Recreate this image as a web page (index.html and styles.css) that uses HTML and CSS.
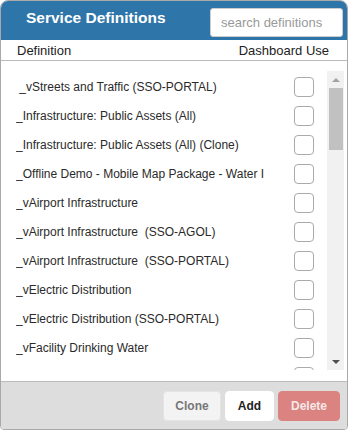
FILE: index.html
```html
<!DOCTYPE html>
<html lang="en">
<head>
    <meta charset="UTF-8">
    <meta name="viewport" content="width=device-width, initial-scale=1.0">
    <title>Service Definitions</title>
    <link rel="stylesheet" href="styles.css">
</head>
<body>
    <div class="panel">
        <!-- Header -->
        <div class="panel-header">
            <h1 class="title">Service Definitions</h1>
            <input type="text" class="search" placeholder="search definitions" />
        </div>

        <div class="columns">
            <span>Definition</span>
            <span>Dashboard Use</span>
        </div>

        <!-- Definition list -->
        <div class="panel-body">
            <div class="list">
                <div class="row"><span class="label"> _vStreets and Traffic (SSO-PORTAL)</span><span class="check"></span></div>
                <div class="row"><span class="label">_Infrastructure: Public Assets (All)</span><span class="check"></span></div>
                <div class="row"><span class="label">_Infrastructure: Public Assets (All) (Clone)</span><span class="check"></span></div>
                <div class="row"><span class="label">_Offline Demo - Mobile Map Package - Water I</span><span class="check"></span></div>
                <div class="row"><span class="label">_vAirport Infrastructure</span><span class="check"></span></div>
                <div class="row"><span class="label">_vAirport Infrastructure  (SSO-AGOL)</span><span class="check"></span></div>
                <div class="row"><span class="label">_vAirport Infrastructure  (SSO-PORTAL)</span><span class="check"></span></div>
                <div class="row"><span class="label">_vElectric Distribution</span><span class="check"></span></div>
                <div class="row"><span class="label">_vElectric Distribution (SSO-PORTAL)</span><span class="check"></span></div>
                <div class="row"><span class="label">_vFacility Drinking Water</span><span class="check"></span></div>
                <div class="row"><span class="label"></span><span class="check"></span></div>
            </div>
            <div class="scrollbar">
                <div class="arrow arrow-up"></div>
                <div class="track"><div class="thumb"></div></div>
                <div class="arrow arrow-down"></div>
            </div>
        </div>

        <!-- Footer buttons -->
        <div class="panel-footer">
            <button class="btn btn-clone">Clone</button>
            <button class="btn btn-add">Add</button>
            <button class="btn btn-delete">Delete</button>
        </div>
    </div>
</body>
</html>
```

FILE: styles.css
```css
body {
    font-family: 'Liberation Sans', Arial, sans-serif;
    margin: 0;
    background: #fff;
    color: #222;
}
.panel {
    width: 348px;
    height: 430px;
    box-sizing: border-box;
    border: 1px solid #a9a9a9;
    border-radius: 8px 8px 4px 4px;
    overflow: hidden;
    display: flex;
    flex-direction: column;
}
.panel-header {
    height: 39px;
    background: #2e75a9;
    display: flex;
    align-items: center;
    justify-content: space-between;
    padding: 0 4px 0 25px;
}
.title {
    margin: 0 0 6px;
    font-size: 15.5px;
    font-weight: bold;
    color: #fff;
}
.search {
    width: 133px;
    height: 29px;
    box-sizing: border-box;
    margin-top: 3px;
    border: 1px solid #ccc;
    border-radius: 3px;
    padding: 0 10px;
    font-family: inherit;
    font-size: 13px;
    color: #333;
}
.search::placeholder {
    color: #999;
}
.columns {
    height: 20px;
    border-bottom: 1px solid #bbb;
    display: flex;
    align-items: center;
    justify-content: space-between;
    padding: 0 18px 0 16px;
    font-size: 13px;
    color: #222;
}
.panel-body {
    flex: 1;
    display: flex;
    padding: 10px 3px 11px 15px;
    min-height: 0;
}
.list {
    flex: 1;
    overflow: hidden;
    padding-top: 1px;
}
.row {
    height: 29px;
    display: flex;
    align-items: center;
    justify-content: space-between;
}
.label {
    font-size: 12px;
    color: #2a2a2a;
    white-space: pre;
}
.check {
    flex: none;
    width: 20px;
    height: 20px;
    box-sizing: border-box;
    border: 1px solid #aaa;
    border-radius: 4px;
    margin-right: 13px;
}
.scrollbar {
    width: 17px;
    background: #f1f1f1;
    display: flex;
    flex-direction: column;
}
.arrow {
    height: 17px;
    display: flex;
    align-items: center;
    justify-content: center;
}
.arrow::before {
    content: '';
    border-left: 4px solid transparent;
    border-right: 4px solid transparent;
}
.arrow-up::before {
    border-bottom: 4px solid #a3a3a3;
}
.arrow-down::before {
    border-top: 4px solid #505050;
}
.track {
    flex: 1;
    padding: 0 1px 0 2px;
}
.thumb {
    height: 62px;
    background: #c1c1c1;
}
.panel-footer {
    height: 47px;
    background: #dddddd;
    border-top: 1px solid #bbb;
    display: flex;
    align-items: center;
    justify-content: flex-end;
    gap: 4px;
    padding: 0 7px 0 0;
}
.btn {
    height: 30px;
    padding: 0 11px;
    font-family: inherit;
    font-size: 12px;
    font-weight: bold;
    border: 1px solid #e4e4e4;
    border-radius: 4px;
    cursor: pointer;
}
.btn-clone {
    background: #f3f3f3;
    color: #777;
    width: 58px;
}
.btn-add {
    background: #fff;
    color: #222;
    border-color: #fff;
    width: 49px;
}
.btn-delete {
    background: #da8381;
    color: #f6e8e8;
    border-color: #da8381;
    width: 62px;
}
```
